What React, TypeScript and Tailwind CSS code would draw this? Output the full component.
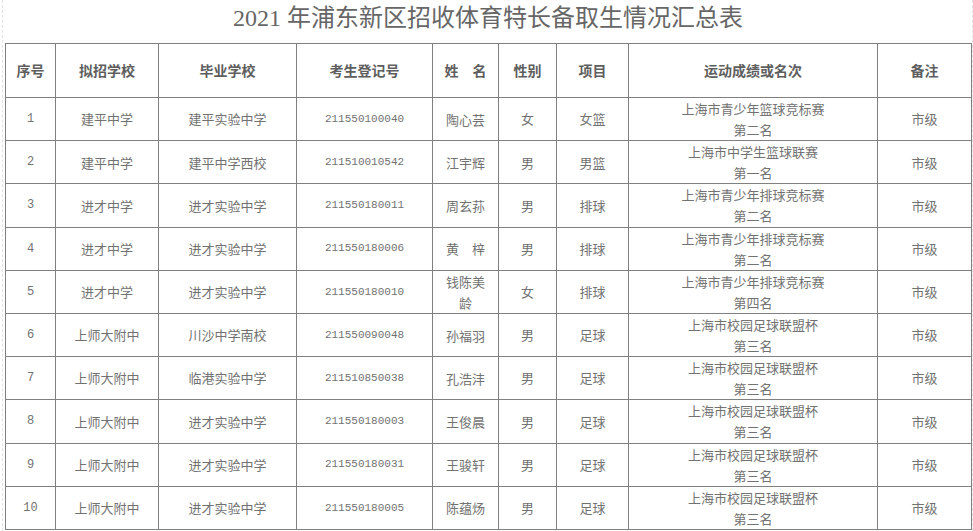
import React from 'react'

type Row = {
  no: number
  school: string
  from: string
  id: string
  name: React.ReactNode
  sex: string
  item: string
  match: string
  rank: string
  note: string
}

const rows: Row[] = [
  { no: 1, school: '建平中学', from: '建平实验中学', id: '211550100040', name: '陶心芸', sex: '女', item: '女篮', match: '上海市青少年篮球竞标赛', rank: '第二名', note: '市级' },
  { no: 2, school: '建平中学', from: '建平中学西校', id: '211510010542', name: '江宇辉', sex: '男', item: '男篮', match: '上海市中学生篮球联赛', rank: '第一名', note: '市级' },
  { no: 3, school: '进才中学', from: '进才实验中学', id: '211550180011', name: '周玄荪', sex: '男', item: '排球', match: '上海市青少年排球竞标赛', rank: '第二名', note: '市级' },
  { no: 4, school: '进才中学', from: '进才实验中学', id: '211550180006', name: '黄　梓', sex: '男', item: '排球', match: '上海市青少年排球竞标赛', rank: '第二名', note: '市级' },
  { no: 5, school: '进才中学', from: '进才实验中学', id: '211550180010', name: <>钱陈美<br />龄</>, sex: '女', item: '排球', match: '上海市青少年排球竞标赛', rank: '第四名', note: '市级' },
  { no: 6, school: '上师大附中', from: '川沙中学南校', id: '211550090048', name: '孙福羽', sex: '男', item: '足球', match: '上海市校园足球联盟杯', rank: '第三名', note: '市级' },
  { no: 7, school: '上师大附中', from: '临港实验中学', id: '211510850038', name: '孔浩沣', sex: '男', item: '足球', match: '上海市校园足球联盟杯', rank: '第三名', note: '市级' },
  { no: 8, school: '上师大附中', from: '进才实验中学', id: '211550180003', name: '王俊晨', sex: '男', item: '足球', match: '上海市校园足球联盟杯', rank: '第三名', note: '市级' },
  { no: 9, school: '上师大附中', from: '进才实验中学', id: '211550180031', name: '王骏轩', sex: '男', item: '足球', match: '上海市校园足球联盟杯', rank: '第三名', note: '市级' },
  { no: 10, school: '上师大附中', from: '进才实验中学', id: '211550180005', name: '陈蕴炀', sex: '男', item: '足球', match: '上海市校园足球联盟杯', rank: '第三名', note: '市级' },
]

const heads = ['序号', '拟招学校', '毕业学校', '考生登记号', '姓　名', '性别', '项目', '运动成绩或名次', '备注']
const widths = ['w-[50px]', 'w-[103px]', 'w-[138px]', 'w-[136px]', 'w-[66px]', 'w-[58px]', 'w-[72px]', 'w-[249px]', 'w-[94px]']

const cjk = "font-['Liberation_Serif','Noto_Sans_CJK_SC',serif]"
const cell = 'border border-[#808080] text-center align-middle p-0'

export default function App() {
  return (
    <div className="h-[531px] w-[973px] overflow-hidden bg-white">
      <div className="ml-[2px] h-full w-[971px] border-x border-dashed border-[#e2e2e2] pl-[2px]">
        <h1 className={`flex h-[43px] w-[966px] items-center justify-center pb-[8px] text-[24px] leading-none text-[#666] ${cjk}`}>
          2021 年浦东新区招收体育特长备取生情况汇总表
        </h1>
        <table className="w-[966px] table-fixed border-collapse text-[#727272]">
          <colgroup>
            {widths.map((w, i) => (
              <col key={i} className={w} />
            ))}
          </colgroup>
          <thead>
            <tr className="h-[54px]">
              {heads.map((h) => (
                <th key={h} className={`${cell} text-[14px] font-semibold text-[#5e5e5e] font-['Noto_Sans_CJK_SC',sans-serif]`}>
                  {h}
                </th>
              ))}
            </tr>
          </thead>
          <tbody className="text-[13px] font-['Noto_Sans_CJK_SC',sans-serif]">
            {rows.map((r) => (
              <tr key={r.no} className="h-[43.2px]">
                <td className={`${cell} font-['Liberation_Mono',monospace] text-[12px]`}>{r.no}</td>
                <td className={cell}>{r.school}</td>
                <td className={cell}>{r.from}</td>
                <td className={`${cell} font-['Liberation_Mono',monospace] text-[11px]`}>{r.id}</td>
                <td className={`${cell} leading-[21px]`}>{r.name}</td>
                <td className={cell}>{r.sex}</td>
                <td className={cell}>{r.item}</td>
                <td className={`${cell} leading-[21px]`}>
                  {r.match}
                  <br />
                  {r.rank}
                </td>
                <td className={cell}>{r.note}</td>
              </tr>
            ))}
          </tbody>
        </table>
      </div>
    </div>
  )
}
